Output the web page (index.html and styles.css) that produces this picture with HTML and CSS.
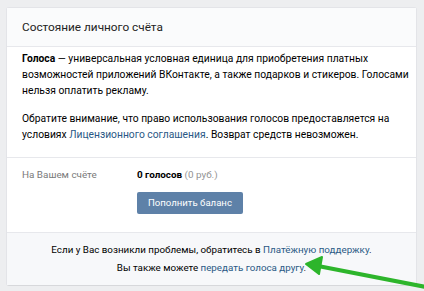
FILE: index.html
```html
<!DOCTYPE html>
<html lang="ru">

<head>
  <meta charset="UTF-8" />
  <meta name="viewport" content="width=device-width, initial-scale=1.0" />
  <title>Голоса</title>
  <link rel="stylesheet" href="styles.css">
</head>

<body>
  <div class="page">
    <div class="balance-card">
      <div class="card-header">Состояние личного счёта</div>

      <div class="card-info">
        <p><b>Голоса</b> — универсальная условная единица для приобретения платных возможностей приложений ВКонтакте, а также подарков и стикеров. Голосами нельзя оплатить рекламу.</p>
        <p>Обратите внимание, что право использования голосов предоставляется на условиях <a href="#" class="link">Лицензионного соглашения</a>. Возврат средств невозможен.</p>
      </div>

      <div class="card-balance">
        <div class="balance-label">На Вашем счёте</div>
        <div class="balance-value">
          <div><b>0 голосов</b> <span class="muted">(0 руб.)</span></div>
          <button class="flat-button">Пополнить баланс</button>
        </div>
      </div>

      <div class="card-footer">
        Если у Вас возникли проблемы, обратитесь в <a href="#" class="link">Платёжную поддержку</a>.<br>
        Вы также можете <a href="#" class="link">передать голоса другу</a>.
      </div>
    </div>

    <!-- стрелка поверх скриншота -->
    <svg class="arrow" width="424" height="291" viewBox="0 0 424 291">
      <path d="M426 287 L318 266" stroke="#2db52b" stroke-width="4" stroke-linecap="round" fill="none" />
      <path d="M306 264 L322 257 L319 274 Z" fill="#2db52b" stroke="#2db52b" stroke-width="2" stroke-linejoin="round" />
    </svg>
  </div>
</body>

</html>
```

FILE: styles.css
```css
body {
  margin: 0;
  padding: 0;
  background: #edeef0;
  font-family: Roboto, "Open Sans", "Liberation Sans", sans-serif;
  font-size: 10.5px;
  line-height: 16px;
  color: #000;
}

.page {
  position: relative;
  padding: 8px 8px 8px 7px;
  height: 275px;
  overflow: hidden;
}

.balance-card {
  background: #fff;
  border-radius: 2px;
  box-shadow: 0 1px 0 0 #d7d8db, 0 0 0 1px #e3e4e8;
}

.card-header {
  background: #fafbfc;
  border-bottom: 1px solid #e7e8ec;
  padding: 11px 15px 11px 15px;
  font-size: 11.8px;
  line-height: 16px;
  color: #222;
}

.card-info {
  padding: 4px 5px 2px 15px;
  border-bottom: 1px solid #e7e8ec;
  font-size: 10.3px;
}

.card-info p {
  margin: 0 0 12px;
}

.link {
  color: #2a5885;
  text-decoration: none;
}

.card-balance {
  display: flex;
  padding: 9px 15px 18px;
  font-size: 9.9px;
}

.balance-label {
  width: 115px;
  color: #7a7a7a;
}

.balance-value b {
  font-weight: 700;
}

.muted {
  color: #939393;
}

.flat-button {
  display: block;
  margin-top: 9px;
  background: #5e81a8;
  color: #fff;
  border: none;
  border-radius: 2px;
  font-family: inherit;
  font-size: 9.6px;
  line-height: 14px;
  padding: 4px 11px;
}

.card-footer {
  background: #f7f8fa;
  border-top: 1px solid #e7e8ec;
  text-align: center;
  padding: 8px 15px 8px;
  font-size: 9.8px;
  line-height: 18px;
  color: #000;
}

.arrow {
  position: absolute;
  left: 0;
  top: 0;
  pointer-events: none;
}
```
